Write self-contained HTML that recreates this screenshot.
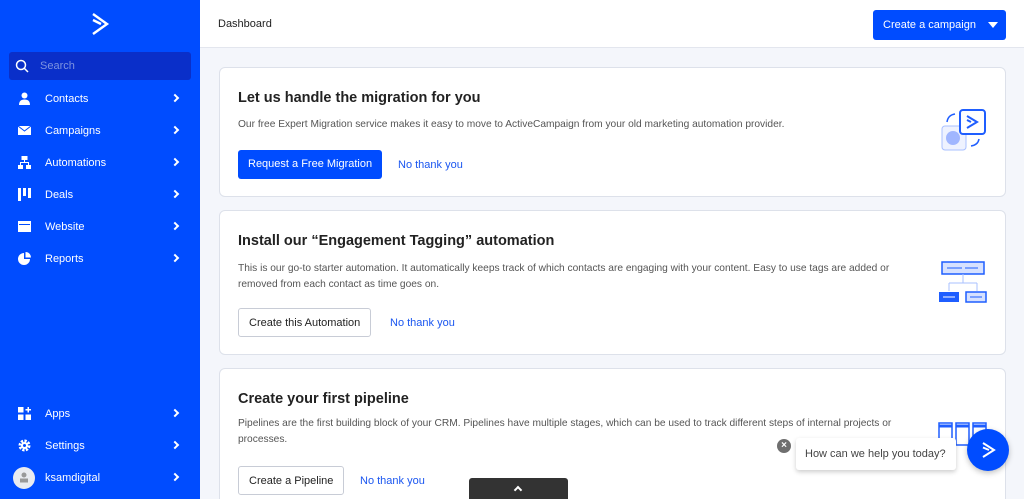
<!DOCTYPE html>
<html><head><style>
*{box-sizing:border-box;margin:0;padding:0;font-family:"Liberation Sans",Arial,sans-serif}
html,body{width:1024px;height:499px;overflow:hidden}
body{background:#f4f6fb;position:relative}
.sb{position:absolute;left:0;top:0;width:200px;height:499px;background:#004cff;color:#fff}
.search{position:absolute;left:9px;top:52px;width:182px;height:28px;background:#0a2fc9;border-radius:3px;font-size:11px;color:#7d93e0;padding:8px 0 0 31px}
.nav{position:absolute;left:0;width:200px;height:20px;font-size:11px;color:#fff}
.nav .ic{position:absolute;left:18px;top:3px;width:13px;height:13px}
.nav span{position:absolute;left:45px;top:4px}
.nav i{position:absolute;left:172px;top:6px;width:6px;height:6px;border-right:2px solid #fff;border-top:2px solid #fff;transform:rotate(45deg)}
.hdr{position:absolute;left:200px;top:0;right:0;height:48px;background:#fff;border-bottom:1px solid #e3e6ee}
.card{position:absolute;left:219px;width:787px;background:#fff;border:1px solid #dde1ea;border-radius:6px}
.card h2{position:absolute;left:18px;font-size:14.5px;font-weight:bold;color:#222}
.card p{position:absolute;left:18px;width:680px;font-size:10.2px;color:#555;line-height:16px}
.btn{position:absolute;left:18px;height:29px;border-radius:3px;font-size:11px;padding:8px 10px 0}
.pri{background:#004cff;color:#fff}
.sec{background:#fff;border:1px solid #c8ccd6;color:#222}
.lnk{position:absolute;font-size:11px;color:#1a56f0}
</style></head><body>
<div class="sb">
<svg style="position:absolute;left:90px;top:12px" width="20" height="24" viewBox="0 0 20 24"><path d="M3 2 L17 12 L3 22" fill="none" stroke="#fff" stroke-width="2.4"/><path d="M3 8 L11 12" stroke="#fff" stroke-width="2.4"/></svg>
<div class="search">Search</div>
<svg style="position:absolute;left:15px;top:59px" width="14" height="14"><circle cx="6" cy="6" r="4.5" fill="none" stroke="#fff" stroke-width="1.5"/><path d="M9.5 9.5 L13 13" stroke="#fff" stroke-width="1.5"/></svg>
<div class="nav" style="top:89px"><svg class="ic" viewBox="0 0 13 13"><circle cx="6.5" cy="3.5" r="3" fill="#fff"/><path d="M1 13 Q1 7.5 6.5 7.5 Q12 7.5 12 13Z" fill="#fff"/></svg><span>Contacts</span><i></i></div>
<div class="nav" style="top:121px"><svg class="ic" viewBox="0 0 13 13"><rect x="0" y="2" width="13" height="9" fill="#fff"/><path d="M0 2 L6.5 7 L13 2" fill="none" stroke="#004cff" stroke-width="1"/></svg><span>Campaigns</span><i></i></div>
<div class="nav" style="top:153px"><svg class="ic" viewBox="0 0 13 13"><rect x="3.5" y="0" width="6" height="4" fill="#fff"/><rect x="0" y="9" width="5" height="4" fill="#fff"/><rect x="8" y="9" width="5" height="4" fill="#fff"/><path d="M6.5 4V6.5M2.5 9V6.5H10.5V9" stroke="#fff" fill="none"/></svg><span>Automations</span><i></i></div>
<div class="nav" style="top:185px"><svg class="ic" viewBox="0 0 13 13"><rect x="0" y="0" width="3" height="13" fill="#fff"/><rect x="5" y="0" width="3" height="8" fill="#fff"/><rect x="10" y="0" width="3" height="10" fill="#fff"/></svg><span>Deals</span><i></i></div>
<div class="nav" style="top:217px"><svg class="ic" viewBox="0 0 13 13"><rect x="0" y="1" width="13" height="11" fill="#fff"/><rect x="1" y="4" width="11" height="1" fill="#004cff"/></svg><span>Website</span><i></i></div>
<div class="nav" style="top:249px"><svg class="ic" viewBox="0 0 13 13"><path d="M6 1 A6 6 0 1 0 12 7 L6 7Z" fill="#fff"/><path d="M7.5 0 A5.5 5.5 0 0 1 13 5.5 L7.5 5.5Z" fill="#fff"/></svg><span>Reports</span><i></i></div>
<div class="nav" style="top:404px"><svg class="ic" viewBox="0 0 13 13"><rect x="0" y="0" width="5.5" height="5.5" fill="#fff"/><rect x="0" y="7.5" width="5.5" height="5.5" fill="#fff"/><rect x="7.5" y="7.5" width="5.5" height="5.5" fill="#fff"/><path d="M10.25 0V5.5M7.5 2.75H13" stroke="#fff" stroke-width="1.5"/></svg><span>Apps</span><i></i></div>
<div class="nav" style="top:436px"><svg class="ic" viewBox="0 0 13 13"><circle cx="6.5" cy="6.5" r="4.5" fill="none" stroke="#fff" stroke-width="3" stroke-dasharray="2.2 1.3"/><circle cx="6.5" cy="6.5" r="3.5" fill="#fff"/><circle cx="6.5" cy="6.5" r="1.5" fill="#004cff"/></svg><span>Settings</span><i></i></div>
<div class="nav" style="top:468px"><div style="position:absolute;left:13px;top:-1px;width:22px;height:22px;border-radius:50%;background:#e9ebf0"></div><svg style="position:absolute;left:19px;top:4px" width="10" height="11"><circle cx="5" cy="3" r="2.5" fill="#999"/><rect x="1" y="6.5" width="8" height="4" fill="#999"/></svg><span>ksamdigital</span><i></i></div>
</div>
<div class="hdr">
<div style="position:absolute;left:18px;top:18px;font-size:11px;color:#222">Dashboard</div>
<div style="position:absolute;left:673px;top:10px;width:133px;height:30px;background:#004cff;border-radius:3px;color:#fff;font-size:11px;padding:9px 0 0 10px">Create a campaign<span style="position:absolute;right:8px;top:12px;border:5px solid transparent;border-top:6px solid #fff;border-bottom:0"></span></div>
</div>
<div class="card" style="top:67px;height:130px">
<h2 style="top:22px">Let us handle the migration for you</h2>
<p style="top:49px">Our free Expert Migration service makes it easy to move to ActiveCampaign from your old marketing automation provider.</p>
<div class="btn pri" style="top:82px">Request a Free Migration</div>
<div class="lnk" style="left:178px;top:91px">No thank you</div>
<svg style="position:absolute;left:720px;top:40px" width="50" height="48"><rect x="2" y="18" width="24" height="24" rx="3" fill="#eef2ff" stroke="#a9c0ff"/><circle cx="13" cy="30" r="7" fill="#a0b6ff"/><rect x="20" y="2" width="25" height="24" rx="3" fill="#fff" stroke="#1f5eff" stroke-width="2"/><path d="M27 8 L37 14 L27 20M27 12 L31 14" fill="none" stroke="#1f5eff" stroke-width="2"/><path d="M7 14 Q8 7 15 6" fill="none" stroke="#1f5eff" stroke-width="1.5"/><path d="M39 31 Q38 37 31 38" fill="none" stroke="#1f5eff" stroke-width="1.5"/></svg>
</div>
<div class="card" style="top:210px;height:145px">
<h2 style="top:22px">Install our “Engagement Tagging” automation</h2>
<p style="top:50px">This is our go-to starter automation. It automatically keeps track of which contacts are engaging with your content. Easy to use tags are added or removed from each contact as time goes on.</p>
<div class="btn sec" style="top:97px">Create this Automation</div>
<div class="lnk" style="left:170px;top:106px">No thank you</div>
<svg style="position:absolute;left:718px;top:50px" width="50" height="46"><rect x="4" y="1" width="42" height="12" fill="#d6e1ff" stroke="#1f5eff" stroke-width="1.5"/><path d="M9 7H24M27 7H40" stroke="#1f5eff"/><path d="M25 13V22M11 22H39M11 22V30M39 22V30" stroke="#a9c0ff" fill="none"/><rect x="1" y="31" width="20" height="10" fill="#1f5eff"/><path d="M5 36H17" stroke="#fff"/><rect x="28" y="31" width="20" height="10" fill="#d6e1ff" stroke="#1f5eff" stroke-width="1.5"/><path d="M32 36H44" stroke="#1f5eff"/></svg>
</div>
<div class="card" style="top:368px;height:140px">
<h2 style="top:22px">Create your first pipeline</h2>
<p style="top:47px">Pipelines are the first building block of your CRM. Pipelines have multiple stages, which can be used to track different steps of internal projects or processes.</p>
<div class="btn sec" style="top:97px">Create a Pipeline</div>
<div class="lnk" style="left:140px;top:106px">No thank you</div>
<svg style="position:absolute;left:718px;top:53px" width="50" height="24"><rect x="1" y="1" width="13" height="20" fill="#fff" stroke="#1f5eff" stroke-width="1.5"/><rect x="18" y="1" width="13" height="22" fill="#fff" stroke="#1f5eff" stroke-width="1.5"/><rect x="35" y="1" width="13" height="14" fill="#fff" stroke="#1f5eff" stroke-width="1.5"/><path d="M1 4H14M18 4H31M35 4H48" stroke="#1f5eff" stroke-width="3"/></svg>
</div>
<div style="position:absolute;left:796px;top:438px;width:160px;height:32px;background:#fff;border-radius:3px;box-shadow:0 2px 5px rgba(0,0,0,.2);font-size:11px;color:#444;padding:10px 0 0 9px">How can we help you today?</div>
<div style="position:absolute;left:777px;top:439px;width:14px;height:14px;border-radius:50%;background:#6f6f6f;color:#fff;font-size:10px;text-align:center;line-height:14px;font-weight:bold">×</div>
<div style="position:absolute;left:967px;top:429px;width:42px;height:42px;border-radius:50%;background:#004cff;box-shadow:0 2px 6px rgba(0,0,0,.25)"><svg style="position:absolute;left:14px;top:12px" width="16" height="18"><path d="M2 2 L13 9 L2 16M2 6.5 L8 9" fill="none" stroke="#fff" stroke-width="2"/></svg></div>
<div style="position:absolute;left:469px;top:478px;width:99px;height:25px;background:#333;border-radius:3px 3px 0 0"><div style="position:absolute;left:46px;top:9px;width:6px;height:6px;border-left:2px solid #fff;border-top:2px solid #fff;transform:rotate(45deg)"></div></div>
</body></html>
